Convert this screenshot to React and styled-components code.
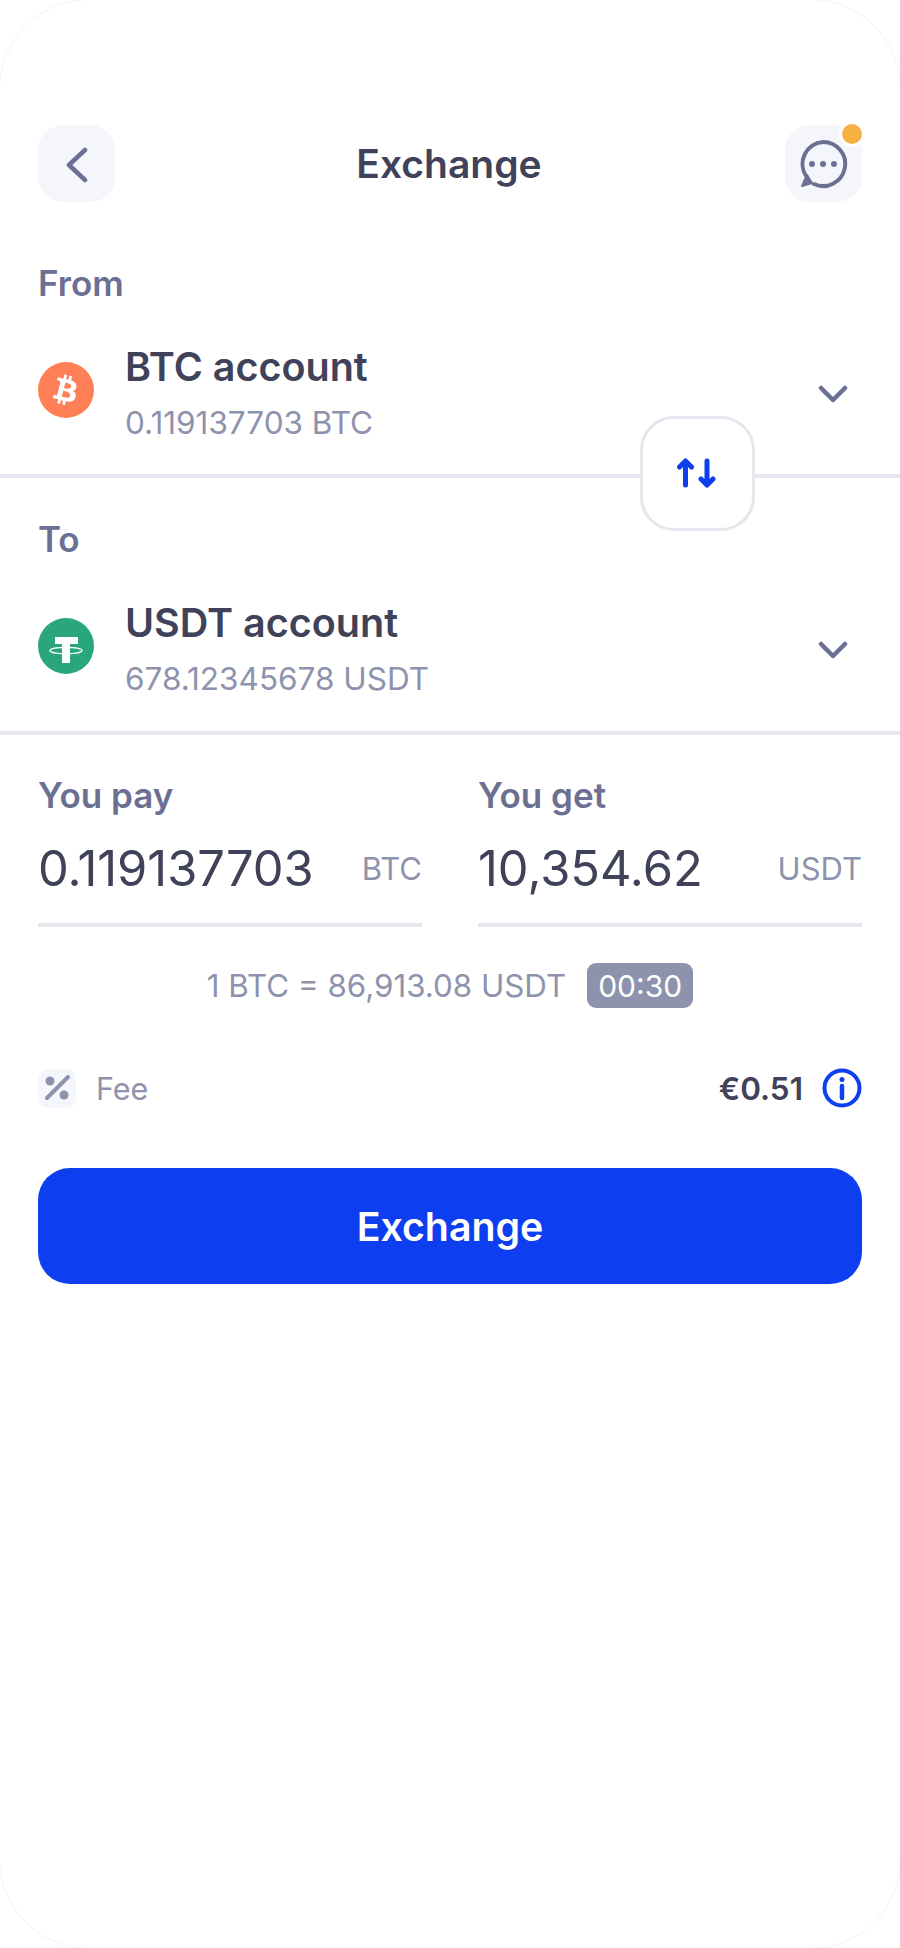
import React from 'react';
import styled, { createGlobalStyle } from 'styled-components';
import { FaBtc } from 'react-icons/fa';

const GlobalStyle = createGlobalStyle`
  html, body {
    margin: 0;
    padding: 0;
    background: #fff;
    overflow: hidden;
  }
  * {
    box-sizing: border-box;
  }
`;

const ink = '#3f4259';
const slate = '#6b7093';
const muted = '#8e93ad';
const line = '#e6e6ef';
const blue = '#0d3ef0';

const Screen = styled.div`
  width: 902px;
  height: 1950px;
  margin: -1px 0 0 -1px;
  padding-top: 125px;
  background: #fff;
  border: 1px solid #f3f3f6;
  border-radius: 90px;
  font-family: Inter, 'Liberation Sans', sans-serif;
  color: ${ink};
`;

const Header = styled.header`
  display: flex;
  align-items: center;
  justify-content: space-between;
  padding: 0 38px;
  height: 77px;
`;

const Title = styled.h1`
  margin: 0 2px 0 0;
  font-size: 39px;
  font-weight: 600;
  line-height: 44px;
`;

const IconButton = styled.button`
  position: relative;
  display: flex;
  align-items: center;
  justify-content: center;
  width: 77px;
  height: 77px;
  padding: 0;
  border: 0;
  border-radius: 25px;
  background: #f5f6fb;
  color: ${slate};
`;

const NotificationDot = styled.span`
  position: absolute;
  top: -4px;
  right: -3px;
  width: 26px;
  height: 26px;
  border: 3px solid #fff;
  border-radius: 50%;
  background: #f7b042;
`;

const Section = styled.section`
  position: relative;
  padding: ${(p) => p.$top}px 38px ${(p) => p.$bottom}px;
  border-bottom: 4px solid ${line};
`;

const Label = styled.div`
  font-size: 35px;
  font-weight: 600;
  line-height: 40px;
  color: ${slate};
`;

const AccountRow = styled.div`
  display: flex;
  align-items: center;
  margin-top: ${(p) => p.$gap}px;
`;

const CoinBadge = styled.div`
  display: flex;
  align-items: center;
  justify-content: center;
  flex: none;
  align-self: flex-start;
  width: 56px;
  height: 56px;
  margin-top: 15px;
  border-radius: 50%;
  background: ${(p) => p.$color};
  color: #fff;
`;

const BitcoinGlyph = styled(FaBtc)`
  transform: rotate(14deg);
`;

const AccountText = styled.div`
  flex: 1;
  margin-left: 31px;
`;

const AccountName = styled.div`
  font-size: 39.500px;
  font-weight: 600;
  line-height: 40px;
`;

const AccountBalance = styled.div`
  margin-top: 18px;
  font-size: 31.500px;
  line-height: 36px;
  color: ${muted};
`;

const Chevron = styled.svg`
  flex: none;
  margin-right: 14px;
`;

const SwapButton = styled.button`
  position: absolute;
  right: 145px;
  bottom: -57px;
  display: flex;
  align-items: center;
  justify-content: center;
  width: 115px;
  height: 115px;
  padding: 0;
  border: 3px solid ${line};
  border-radius: 34px;
  background: #fff;
`;

const Amounts = styled.div`
  display: grid;
  grid-template-columns: 384px 384px;
  column-gap: 56px;
  padding: 40px 38px 0;
`;

const AmountField = styled.div`
  display: flex;
  flex-direction: column;
`;

const AmountRow = styled.div`
  display: flex;
  align-items: center;
  justify-content: space-between;
  height: 112px;
  padding: 18px 0 19px;
  border-bottom: 4px solid ${line};
`;

const AmountValue = styled.span`
  font-size: 48.800px;
  line-height: 56px;
`;

const AmountUnit = styled.span`
  font-size: 31px;
  color: ${muted};
`;

const RateRow = styled.div`
  display: flex;
  align-items: center;
  justify-content: center;
  gap: 21px;
  margin-top: 36px;
  font-size: 31.300px;
  color: ${muted};
`;

const Countdown = styled.span`
  display: inline-flex;
  align-items: center;
  justify-content: center;
  width: 106px;
  height: 45px;
  border-radius: 9px;
  background: #8e93ad;
  color: #fff;
  font-size: 30px;
`;

const FeeRow = styled.div`
  display: flex;
  align-items: center;
  justify-content: space-between;
  height: 40px;
  margin-top: 60px;
  padding: 0 38px;
`;

const FeeLabel = styled.div`
  display: flex;
  align-items: center;
  gap: 20px;
  font-size: 30.500px;
  color: ${muted};
`;

const FeeTile = styled.span`
  display: flex;
  align-items: center;
  justify-content: center;
  width: 38px;
  height: 39px;
  border-radius: 10px;
  background: #f5f6fb;
`;

const FeeValue = styled.div`
  display: flex;
  align-items: center;
  gap: 19px;
  font-size: 31.500px;
  font-weight: 600;
`;

const SubmitButton = styled.button`
  display: block;
  width: 824px;
  height: 116px;
  margin: 60px 0 0 38px;
  border: 0;
  border-radius: 32px;
  background: ${blue};
  color: #fff;
  font-family: inherit;
  font-size: 39.300px;
  font-weight: 600;
`;

const ChevronDown = () => (
  <Chevron width="30" height="18" viewBox="0 0 30 18" fill="none">
    <path d="M3 3l12 12L27 3" stroke={slate} strokeWidth="4.500" strokeLinecap="round" strokeLinejoin="round" />
  </Chevron>
);

const BackIcon = () => (
  <svg width="24" height="38" viewBox="0 0 24 38" fill="none">
    <path d="M20 5L4 20l16 15" stroke={slate} strokeWidth="4.500" strokeLinecap="round" strokeLinejoin="round" />
  </svg>
);

const ChatIcon = () => (
  <svg width="50" height="50" viewBox="0 0 50 50" fill="none">
    <path
      d="M25 3a22 22 0 1 1-9 42M8.500 37.500A22 22 0 0 1 25 3"
      stroke={slate}
      strokeWidth="4"
      strokeLinecap="round"
    />
    <path d="M9 36l5 8-10 3z" fill={slate} stroke={slate} strokeWidth="2" strokeLinejoin="round" />
    <circle cx="14" cy="25" r="3" fill={slate} />
    <circle cx="25" cy="25" r="3" fill={slate} />
    <circle cx="36" cy="25" r="3" fill={slate} />
  </svg>
);

const SwapIcon = () => (
  <svg width="42" height="32" viewBox="0 0 42 32" fill="none">
    <path
      d="M8.500 27V3M2.500 9l6-6 6 6M30 3v24M24 21l6 6 6-6"
      stroke={blue}
      strokeWidth="5"
      strokeLinecap="round"
      strokeLinejoin="round"
    />
  </svg>
);

const TetherIcon = () => (
  <svg width="56" height="56" viewBox="0 0 56 56" fill="none">
    <path d="M17 19h23v7h-8v19h-8V26h-7z" fill="#fff" />
    <ellipse cx="28" cy="32.500" rx="16" ry="3.200" stroke="#fff" strokeWidth="1.300" />
  </svg>
);

const PercentIcon = () => (
  <svg width="26" height="26" viewBox="0 0 26 26" fill="none">
    <circle cx="6" cy="6" r="4.500" fill={muted} />
    <circle cx="20" cy="20" r="4.500" fill={muted} />
    <path d="M3 23L24 2" stroke={muted} strokeWidth="4" strokeLinecap="round" />
  </svg>
);

const InfoIcon = () => (
  <svg width="40" height="40" viewBox="0 0 40 40" fill="none">
    <circle cx="20" cy="20" r="17.500" stroke={blue} strokeWidth="4" />
    <circle cx="20" cy="11.500" r="2.500" fill={blue} />
    <path d="M20 18v12" stroke={blue} strokeWidth="4.500" strokeLinecap="round" />
  </svg>
);

const Account = ({ color, icon, name, balance, gap }) => (
  <AccountRow $gap={gap}>
    <CoinBadge $color={color}>{icon}</CoinBadge>
    <AccountText>
      <AccountName>{name}</AccountName>
      <AccountBalance>{balance}</AccountBalance>
    </AccountText>
    <ChevronDown />
  </AccountRow>
);

const Amount = ({ label, value, unit }) => (
  <AmountField>
    <Label>{label}</Label>
    <AmountRow>
      <AmountValue>{value}</AmountValue>
      <AmountUnit>{unit}</AmountUnit>
    </AmountRow>
  </AmountField>
);

const App = () => (
  <>
    <GlobalStyle />
    <Screen>
      <Header>
        <IconButton aria-label="Back">
          <BackIcon />
        </IconButton>
        <Title>Exchange</Title>
        <IconButton aria-label="Support">
          <ChatIcon />
          <NotificationDot />
        </IconButton>
      </Header>

      <Section $top={61} $bottom={33}>
        <Label>From</Label>
        <Account
          gap={44}
          color="#ff7f56"
          icon={<BitcoinGlyph size={30} />}
          name="BTC account"
          balance="0.119137703 BTC"
        />
        <SwapButton aria-label="Swap accounts">
          <SwapIcon />
        </SwapButton>
      </Section>

      <Section $top={41} $bottom={34}>
        <Label>To</Label>
        <Account
          gap={44}
          color="#2aa67c"
          icon={<TetherIcon />}
          name="USDT account"
          balance="678.12345678 USDT"
        />
      </Section>

      <Amounts>
        <Amount label="You pay" value="0.119137703" unit="BTC" />
        <Amount label="You get" value="10,354.62" unit="USDT" />
      </Amounts>

      <RateRow>
        <span>1 BTC = 86,913.08 USDT</span>
        <Countdown>00:30</Countdown>
      </RateRow>

      <FeeRow>
        <FeeLabel>
          <FeeTile>
            <PercentIcon />
          </FeeTile>
          Fee
        </FeeLabel>
        <FeeValue>
          €0.51
          <InfoIcon />
        </FeeValue>
      </FeeRow>

      <SubmitButton>Exchange</SubmitButton>
    </Screen>
  </>
);

export default App;
